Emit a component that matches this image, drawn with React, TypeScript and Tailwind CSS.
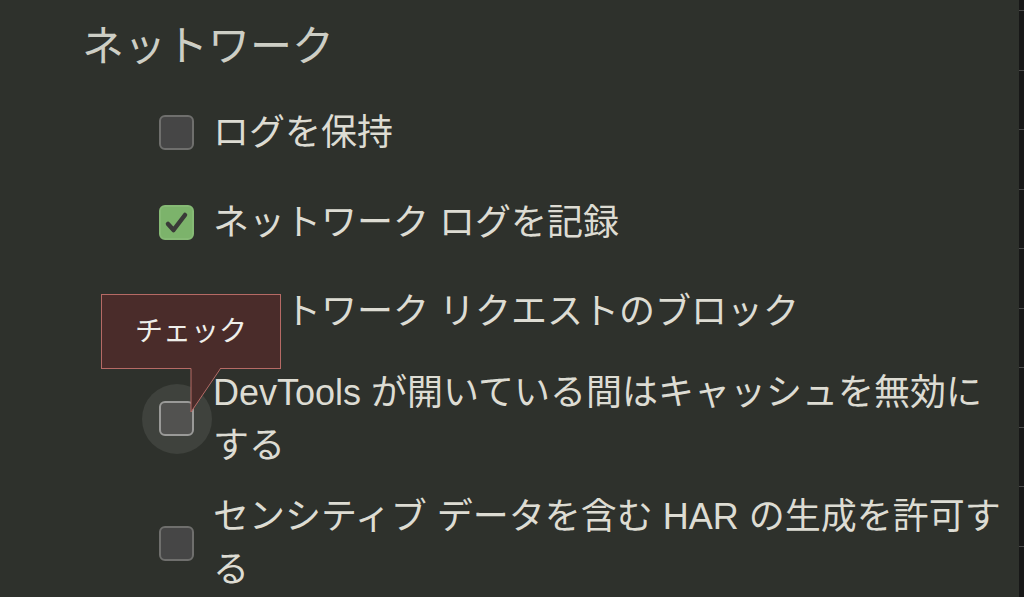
import React from "react";

interface Setting {
  label: string;
  checked?: boolean;
  hovered?: boolean;
}

const settings: Setting[] = [
  { label: "ログを保持" },
  { label: "ネットワーク ログを記録", checked: true },
  { label: "ネットワーク リクエストのブロック" },
  { label: "DevTools が開いている間はキャッシュを無効にする", hovered: true },
  { label: "センシティブ データを含む HAR の生成を許可する" },
];

const Checkbox: React.FC<{ checked?: boolean; hovered?: boolean }> = ({ checked, hovered }) => {
  return (
    <div className="relative flex h-[35px] w-[35px] shrink-0 items-center justify-center">
      {hovered && <div className="absolute left-[-17.5px] top-[-17.5px] h-[70px] w-[70px] rounded-full bg-[#3f423d]" />}
      {checked ? (
        <div className="relative h-[35px] w-[35px] rounded-[6px] border-2 border-[#86ba75] bg-[#7cb36b]">
          <svg viewBox="0 0 31 31" className="absolute inset-0 h-full w-full">
            <polyline points="7,17 12.5,23 24,8" fill="none" stroke="#3a3a38" strokeWidth="4.5" strokeLinecap="round" strokeLinejoin="round" />
          </svg>
        </div>
      ) : (
        <div
          className={`relative h-[35px] w-[35px] rounded-[6px] border-2 ${hovered ? "border-[#9a9a98] bg-[#525250]" : "border-[#6f6f6d] bg-[#464646]"}`}
        />
      )}
    </div>
  );
};

export default function App() {
  return (
    <div className="relative flex h-[597px] w-[1024px] overflow-hidden bg-[#2e312c] font-['Liberation_Sans','Noto_Sans_CJK_JP',sans-serif]">
      <div className="flex-1 pl-[82px] pr-[8px] pt-[17px]">
        <h2 className="text-[42px] leading-[60px] text-[#cdcec5]">ネットワーク</h2>
        <div className="mt-[20px] flex flex-col gap-[18.5px] pl-[77px]">
          {settings.map((s, i) => (
            <div key={i} className="flex min-h-[71px] items-center gap-[19px]">
              <Checkbox checked={s.checked} hovered={s.hovered} />
              <span className="flex-1 text-[36px] leading-[53px] text-[#dddcd3]">{s.label}</span>
            </div>
          ))}
        </div>
      </div>

      {/* right edge strip */}
      <div className="flex w-[5px] flex-col bg-[#171717] pt-[10px]">
        {Array.from({ length: 10 }).map((_, i) => (
          <div key={i} className="h-[59.5px] shrink-0 border-t border-[#4a4a4a]" />
        ))}
      </div>

      {/* tooltip */}
      <div className="absolute left-[101px] top-[294px] flex h-[75px] w-[180px] items-center justify-center border border-[#b66a65] bg-[#4a2c2a]">
        <span className="text-[28px] leading-none text-[#efefea]">チェック</span>
      </div>
      <svg className="absolute left-[185px] top-[366px]" width="40" height="50" viewBox="0 0 40 50">
        <polygon points="6,1 36,1 6,46" fill="#4a2c2a" />
        <polyline points="6,2.5 6,46 35.5,2.5" fill="none" stroke="#b66a65" strokeWidth="1" />
      </svg>
    </div>
  );
}
